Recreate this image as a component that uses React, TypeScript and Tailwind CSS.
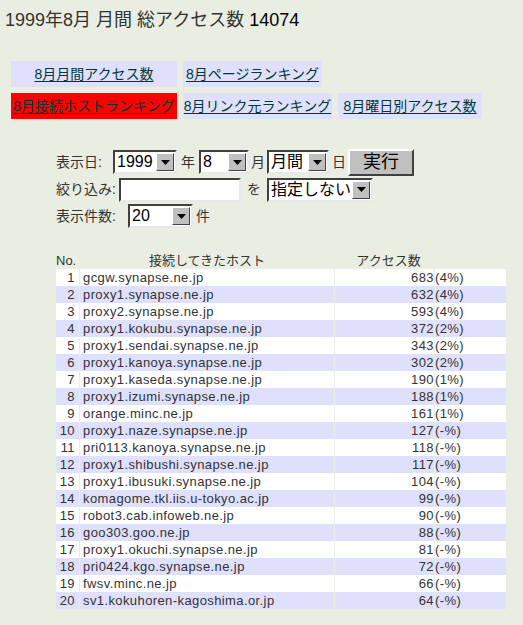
import React from 'react';

const rows: [string, number, string][] = [
  ['gcgw.synapse.ne.jp', 683, '4%'],
  ['proxy1.synapse.ne.jp', 632, '4%'],
  ['proxy2.synapse.ne.jp', 593, '4%'],
  ['proxy1.kokubu.synapse.ne.jp', 372, '2%'],
  ['proxy1.sendai.synapse.ne.jp', 343, '2%'],
  ['proxy1.kanoya.synapse.ne.jp', 302, '2%'],
  ['proxy1.kaseda.synapse.ne.jp', 190, '1%'],
  ['proxy1.izumi.synapse.ne.jp', 188, '1%'],
  ['orange.minc.ne.jp', 161, '1%'],
  ['proxy1.naze.synapse.ne.jp', 127, '-%'],
  ['pri0113.kanoya.synapse.ne.jp', 118, '-%'],
  ['proxy1.shibushi.synapse.ne.jp', 117, '-%'],
  ['proxy1.ibusuki.synapse.ne.jp', 104, '-%'],
  ['komagome.tkl.iis.u-tokyo.ac.jp', 99, '-%'],
  ['robot3.cab.infoweb.ne.jp', 90, '-%'],
  ['goo303.goo.ne.jp', 88, '-%'],
  ['proxy1.okuchi.synapse.ne.jp', 81, '-%'],
  ['pri0424.kgo.synapse.ne.jp', 72, '-%'],
  ['fwsv.minc.ne.jp', 66, '-%'],
  ['sv1.kokuhoren-kagoshima.or.jp', 64, '-%'],
];

const font = 'font-["Liberation_Sans","Noto_Sans_CJK_JP",sans-serif]';

function NavLink({ label, w, active }: { label: string; w: string; active?: boolean }) {
  return (
    <a
      href="#"
      className={`${w} shrink-0 h-[26px] flex items-center justify-center whitespace-nowrap text-[14px] text-[#003838] underline underline-offset-2 ${
        active ? 'bg-[#ff0000]' : 'bg-[#dfe0fb]'
      }`}
    >
      {label}
    </a>
  );
}

// old-style combo box with bevelled arrow button
function Select({ value, w }: { value: string; w: string }) {
  return (
    <div
      className={`${w} h-[24px] flex items-center bg-white border-2 border-t-[#404040] border-l-[#404040] border-b-[#e8e8e8] border-r-[#e8e8e8]`}
    >
      <span className="flex-1 pl-[2px] text-[16px] leading-none text-black">{value}</span>
      <span className="w-[18px] h-[18px] mr-px flex items-center justify-center bg-[#c0c0c0] border border-t-white border-l-white border-b-[#404040] border-r-[#404040]">
        <svg width="9" height="5" viewBox="0 0 9 5">
          <path d="M0 0h9L4.5 5z" fill="#000" />
        </svg>
      </span>
    </div>
  );
}

export default function App() {
  return (
    <div className={`min-h-[625px] bg-[#eaeee2] text-[#333] ${font}`}>
      <h1 className="pt-[8px] pl-[5px] text-[18px] leading-[24px] font-normal">
        1999年8月 月間 総アクセス数 <span className="text-black">14074</span>
      </h1>

      {/* nav links */}
      <div className="pl-[11px] mt-[29px] flex flex-col gap-[6px]">
        <div className="flex gap-[6px]">
          <NavLink label="8月月間アクセス数" w="w-[166px]" />
          <NavLink label="8月ページランキング" w="w-[139px]" />
        </div>
        <div className="flex gap-[6px]">
          <NavLink label="8月接続ホストランキング" w="w-[166px]" active />
          <NavLink label="8月リンク元ランキング" w="w-[149px]" />
          <NavLink label="8月曜日別アクセス数" w="w-[144px]" />
        </div>
      </div>

      {/* form */}
      <div className="pl-[56px] mt-[29px] flex flex-col text-[14px] text-[#333]">
        <div className="flex items-center h-[28px]">
          <span className="w-[57px]">表示日:</span>
          <Select value="1999" w="w-[64px]" />
          <span className="mx-[4px]">年</span>
          <Select value="8" w="w-[50px]" />
          <span className="mx-[2px]">月</span>
          <Select value="月間" w="w-[62px]" />
          <span className="ml-[3px]">日</span>
          <button className="ml-[2px] w-[66px] h-[27px] bg-[#c0c0c0] text-[18px] text-black leading-none border-2 border-t-white border-l-white border-b-[#404040] border-r-[#404040]">
            実行
          </button>
        </div>
        <div className="flex items-center h-[25px] mt-px">
          <span className="w-[63px]">絞り込み:</span>
          <div className="w-[122px] h-[24px] bg-white border-2 border-t-[#404040] border-l-[#404040] border-b-[#e8e8e8] border-r-[#e8e8e8]" />
          <span className="px-[6px]">を</span>
          <Select value="指定しない" w="w-[106px]" />
        </div>
        <div className="flex items-center h-[24px] mt-[2px]">
          <span className="w-[72px]">表示件数:</span>
          <Select value="20" w="w-[65px]" />
          <span className="px-[3px]">件</span>
        </div>
      </div>

      {/* ranking table */}
      <div className="ml-[56px] mt-[24px] w-[450px] text-[13px] leading-[17px] text-[#333]">
        <div className="grid grid-cols-[23px_254px_99px_71px] gap-x-px h-[17px]">
          <span>No.</span>
          <span className="text-center">接続してきたホスト</span>
          <span className="text-center pl-[8px]">アクセス数</span>
          <span />
        </div>
        {rows.map(([host, count, pct], i) => {
          const bg = i % 2 ? 'bg-[#dfe0fb]' : 'bg-white';
          return (
            <div key={host} className="grid grid-cols-[23px_254px_99px_71px] gap-x-px h-[17px] tracking-[0.4px]">
              <span className={`text-right pr-[4px] ${bg}`}>{i + 1}</span>
              <span className={`pl-[3px] ${bg}`}>{host}</span>
              <span className={`text-right ${bg}`}>{count}</span>
              <span className={bg}>({pct})</span>
            </div>
          );
        })}
      </div>
    </div>
  );
}
